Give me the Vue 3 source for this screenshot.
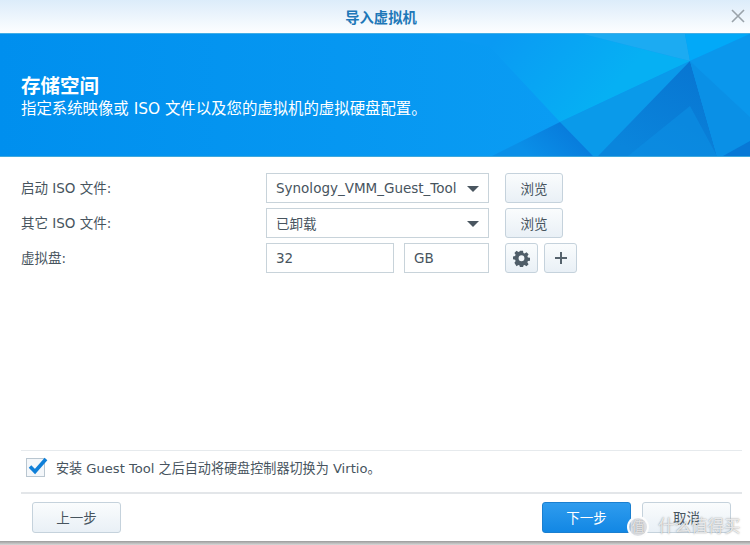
<template>
  <div class="dialog">
    <header class="titlebar">
      <span class="title">导入虚拟机</span>
      <svg class="close" width="16" height="16" viewBox="0 0 16 16"><path d="M2 2 14 14M14 2 2 14" stroke="#9aa3aa" stroke-width="1.6" fill="none"/></svg>
    </header>
    <section class="banner">
      <svg class="art" width="750" height="122" viewBox="0 0 750 122">
        <defs>
          <linearGradient id="base" gradientUnits="userSpaceOnUse" x1="0" y1="0" x2="560" y2="0">
            <stop offset="0" stop-color="#008fee"/><stop offset="1" stop-color="#0a9cf3"/>
          </linearGradient>
          <linearGradient id="glow" gradientUnits="userSpaceOnUse" x1="500" y1="0" x2="590" y2="80">
            <stop offset="0" stop-color="#0a9af3"/><stop offset="1" stop-color="#06b0f3"/>
          </linearGradient>
          <linearGradient id="low" gradientUnits="userSpaceOnUse" x1="690" y1="30" x2="640" y2="122">
            <stop offset="0" stop-color="#0876d2"/><stop offset="1" stop-color="#0a85dc"/>
          </linearGradient>
          <linearGradient id="left" gradientUnits="userSpaceOnUse" x1="560" y1="88" x2="530" y2="122">
            <stop offset="0" stop-color="#087cdc"/><stop offset="1" stop-color="#0a8fe8"/>
          </linearGradient>
        </defs>
        <rect width="750" height="122" fill="url(#base)"/>
        <polygon points="430,0 583,0 690,27 560,88 490,13" fill="url(#glow)"/>
        <polygon points="583,0 685,0 690,27" fill="#1cabf2"/>
        <polygon points="685,0 750,0 690,27" fill="#02a9f8"/>
        <polygon points="690,27 560,88 593,122 598,122" fill="#0a9aea"/>
        <polygon points="560,88 492,122 593,122" fill="url(#left)"/>
        <polygon points="690,27 598,122 717,122" fill="url(#low)"/>
        <polygon points="628,122 690,72 717,122" fill="#0c8de2" opacity=".7"/>
        <polygon points="690,27 750,0 750,83" fill="#0a97ec"/>
        <polygon points="690,27 750,83 750,122 717,122" fill="#0a90e6"/>
        <polygon points="723,122 750,107 750,122" fill="#0878d6"/>
      </svg>
      <div class="heading">
        <h1>存储空间</h1>
        <p>指定系统映像或 ISO 文件以及您的虚拟机的虚拟硬盘配置。</p>
      </div>
    </section>
    <main class="form">
      <div class="row">
        <label>启动 ISO 文件:</label>
        <div class="field select"><span>Synology_VMM_Guest_Tool</span><i class="caret"></i></div>
        <button class="btn browse">浏览</button>
      </div>
      <div class="row">
        <label>其它 ISO 文件:</label>
        <div class="field select"><span>已卸载</span><i class="caret"></i></div>
        <button class="btn browse">浏览</button>
      </div>
      <div class="row">
        <label>虚拟盘:</label>
        <div class="field size">32</div>
        <div class="field unit">GB</div>
        <button class="btn icon">
          <svg width="17" height="17" viewBox="0 0 18 18"><path fill-rule="evenodd" fill="#4f5d68" d="M7.400 1h3.200l.4 2.300 1.300.6 2-1.300 2.200 2.200-1.300 2 .6 1.300 2.300.4v3l-2.300.4-.6 1.300 1.300 2-2.200 2.200-2-1.300-1.300.6-.4 2.300H7.400l-.4-2.300-1.300-.6-2 1.300L1.500 13.800l1.300-2-.6-1.300L0 10V7l2.200-.4.6-1.300-1.300-2 2.200-2.200 2 1.300L7 1.800zM9 5.800a3 3 0 1 0 0 6.200 3 3 0 0 0 0-6.200z" transform="translate(0 -.2)"/></svg>
        </button>
        <button class="btn icon">
          <svg width="16" height="16" viewBox="0 0 16 16"><path d="M8 2v12M2 8h12" stroke="#56636d" stroke-width="2" fill="none"/></svg>
        </button>
      </div>
    </main>
    <div class="option">
      <span class="check">
        <svg width="24" height="22" viewBox="0 0 24 22"><path d="M4 11.500 9 16.500 20 4" stroke="#0f7fd8" stroke-width="3.600" fill="none"/></svg>
      </span>
      <span class="option-text">安装 Guest Tool 之后自动将硬盘控制器切换为 Virtio。</span>
    </div>
    <footer class="footer">
      <button class="btn wide">上一步</button>
      <div class="right">
        <button class="btn wide primary">下一步</button>
        <button class="btn wide cancel">取消</button>
      </div>
    </footer>
    <div class="shadow"></div>
    <div class="mark"><span class="badge">值</span><span>什么值得买</span></div>
  </div>
</template>

<script setup>
</script>

<style>
html, body { margin: 0; background: #fff; }
</style>

<style scoped>
.dialog {
  position: relative;
  width: 750px;
  height: 545px;
  display: flex;
  flex-direction: column;
  overflow: hidden;
  background: #fff;
  font-family: "DejaVu Sans", "Noto Sans CJK SC", sans-serif;
  font-size: 13.500px;
  color: #47545e;
}
.titlebar {
  position: relative;
  height: 33px;
  flex: none;
  display: flex;
  align-items: center;
  justify-content: center;
  background: linear-gradient(#dcecfa, #fdfeff);
  border-bottom: 1px solid #42aee6;
}
.title { color: #1e78b8; font-size: 14.300px; font-weight: 700; padding-left: 12px; }
.close { position: absolute; right: 4px; top: 8px; }
.banner {
  position: relative;
  height: 122px;
  flex: none;
  background: #0090ee;
  border-bottom: 1px solid #3fa9dd;
  display: flex;
  align-items: center;
  color: #fff;
}
.art { position: absolute; left: 0; top: 0; }
.heading { position: relative; padding: 2px 0 0 21px; }
.heading h1 { margin: 0; font-size: 19.500px; line-height: 25px; font-weight: 700; }
.heading p { margin: 0; font-size: 15.400px; line-height: 20px; }
.form {
  flex: 1;
  display: flex;
  flex-direction: column;
  gap: 5px;
  padding: 16px 0 0 21px;
}
.row { display: flex; align-items: center; height: 30px; }
.row label { width: 245px; flex: none; margin-top: -2px; }
.field {
  box-sizing: border-box;
  height: 30px;
  border: 1px solid #c8d3da;
  background: #fff;
  display: flex;
  align-items: center;
  padding-left: 9px;
}
.select { width: 223px; position: relative; }
.size { width: 128px; }
.unit { width: 85px; margin-left: 10px; }
.caret {
  position: absolute;
  right: 9px;
  top: 12px;
  border-left: 6px solid transparent;
  border-right: 6px solid transparent;
  border-top: 6px solid #4a5660;
}
.btn {
  box-sizing: border-box;
  height: 30px;
  border: 1px solid #c5d2dc;
  border-radius: 3px;
  background: linear-gradient(#fafcfd, #e9f0f6);
  color: #47545e;
  font: inherit;
  padding: 0;
  display: flex;
  align-items: center;
  justify-content: center;
}
.browse { width: 58px; margin-left: 16px; }
.icon { width: 33px; }
.unit + .icon { margin-left: 16px; }
.icon + .icon { margin-left: 6px; }
.option {
  flex: none;
  margin: 0 8px 0 21px;
  border-top: 1px solid #e6eaed;
  border-bottom: 2px solid #e3e6e9;
  display: flex;
  align-items: center;
  padding: 0 0 9px 5px;
  height: 32px;
}
.check {
  position: relative;
  width: 19px;
  height: 19px;
  box-sizing: border-box;
  border: 1px solid #b9c6d0;
  background: #f4f7fa;
  margin-right: 11px;
}
.check svg { position: absolute; left: -1px; top: -4px; }
.option-text { font-size: 13.100px; }
.footer {
  flex: none;
  display: flex;
  justify-content: space-between;
  padding: 8px 19px 0 32px;
  box-sizing: border-box;
  height: 47px;
  background: #fff;
}
.right { display: flex; gap: 11px; }
.wide { width: 89px; height: 31px; padding-bottom: 2px; }
.primary {
  background: linear-gradient(#2f9cee, #1287e4);
  border-color: #1a7fd0;
  color: #fff;
}
.shadow {
  flex: none;
  height: 4px;
  background: linear-gradient(#9a9a9a, #d8d8d8);
}
.mark {
  position: absolute;
  left: 627px;
  top: 516px;
  display: flex;
  align-items: center;
  gap: 9px;
  color: rgba(255, 255, 255, .75);
  font-size: 16.500px;
  line-height: 22px;
  text-shadow: 0 0 1.500px rgba(80, 80, 80, .7);
}
.badge {
  box-sizing: border-box;
  width: 22px;
  height: 22px;
  border-radius: 50%;
  background: rgba(215, 218, 222, .8);
  border: 2px solid rgba(255, 255, 255, .95);
  display: flex;
  align-items: center;
  justify-content: center;
  font-size: 13px;
}
</style>
